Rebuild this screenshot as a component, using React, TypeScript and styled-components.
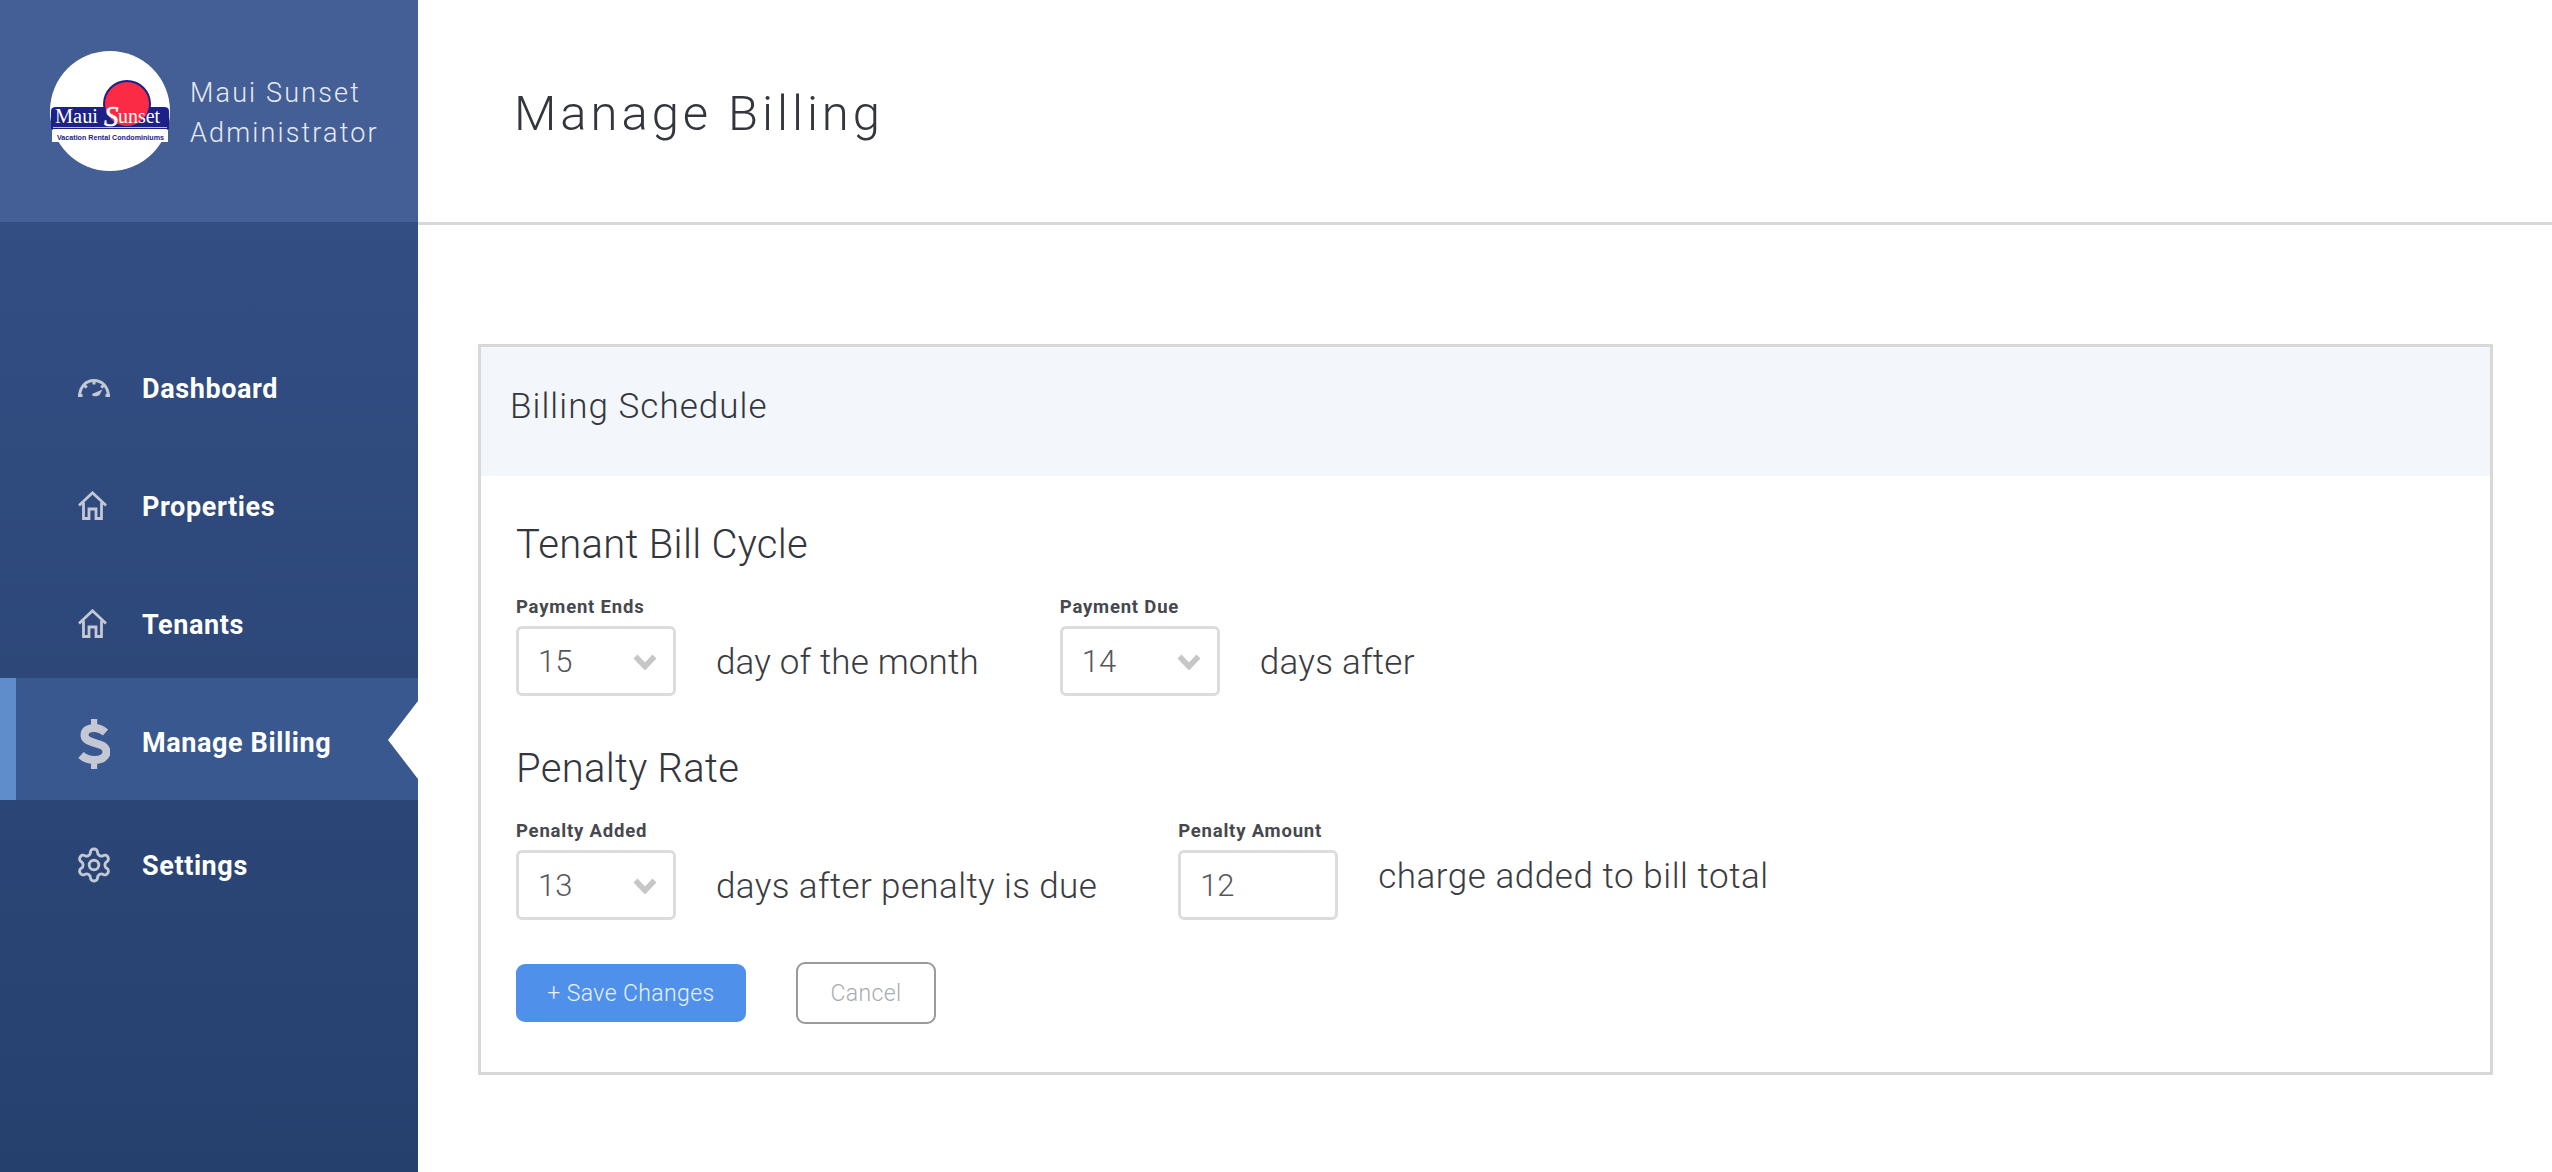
import React from 'react';
import styled, { createGlobalStyle } from 'styled-components';

const Global = createGlobalStyle`
  html, body { margin: 0; padding: 0; background: #fff; }
  * { box-sizing: border-box; }
  body { font-family: Roboto, "Liberation Sans", sans-serif; }
`;

const Page = styled.div`
  display: flex;
  width: 2552px;
  height: 1172px;
  overflow: hidden;
  background: #fff;
`;

const Sidebar = styled.aside`
  width: 418px;
  flex: none;
  display: flex;
  flex-direction: column;
  background: linear-gradient(180deg, #365188 0%, #26406e 100%);
`;

const Brand = styled.div`
  height: 222px;
  flex: none;
  display: flex;
  align-items: center;
  gap: 20px;
  padding-left: 50px;
  background: #445f95;
`;

const Logo = styled.svg`
  width: 120px;
  height: 120px;
  flex: none;
  display: block;
`;

const BrandText = styled.div`
  padding-top: 4px;
  color: #e6eaf2;
  font-weight: 300;
  font-size: 27px;
  line-height: 40px;
  letter-spacing: 2.15px;
  white-space: nowrap;
`;

const Nav = styled.nav`
  display: flex;
  flex-direction: column;
  padding-top: 107px;
`;

const NavItem = styled.a<{ $active?: boolean }>`
  position: relative;
  display: flex;
  align-items: center;
  height: ${(p) => (p.$active ? '122px' : '118px')};
  margin: ${(p) => (p.$active ? '-5px 0 6px' : '0')};
  padding-left: ${(p) => (p.$active ? '62px' : '78px')};
  border-left: ${(p) => (p.$active ? '16px solid #5f8dcb' : '0')};
  background: ${(p) => (p.$active ? '#39588f' : 'transparent')};
  color: #fff;
`;

const NavIcon = styled.span`
  width: 64px;
  flex: none;
  display: flex;
  align-items: center;
  color: #c3c8d4;
`;

const NavLabel = styled.span<{ $active?: boolean }>`
  padding-top: ${(p) => (p.$active ? '7px' : '2px')};
  font-weight: 700;
  font-size: 27px;
  letter-spacing: 0.6px;
  white-space: nowrap;
`;

const Notch = styled.span`
  position: absolute;
  right: 0;
  top: 23px;
  width: 30px;
  height: 78px;
  background: #fff;
  clip-path: polygon(100% 0, 0 50%, 100% 100%);
`;

const Main = styled.main`
  flex: 1;
  min-width: 0;
  display: flex;
  flex-direction: column;
`;

const TopBar = styled.header`
  height: 225px;
  flex: none;
  display: flex;
  align-items: center;
  padding: 4px 0 0 96px;
  border-bottom: 3px solid #d8d8d8;
`;

const PageTitle = styled.h1`
  margin: 0;
  color: #33363d;
  font-weight: 300;
  font-size: 49px;
  letter-spacing: 3.95px;
  white-space: nowrap;
`;

const Card = styled.section`
  margin: 119px 0 0 60px;
  width: 2015px;
  height: 731px;
  border: 3px solid #d8d8d8;
`;

const CardHead = styled.div`
  height: 129px;
  display: flex;
  align-items: center;
  padding: 0 0 11px 29px;
  background: #f3f6fb;
`;

const CardTitle = styled.h2`
  margin: 0;
  color: #33363d;
  font-weight: 300;
  font-size: 35px;
  letter-spacing: 1.05px;
  white-space: nowrap;
`;

const CardBody = styled.div`
  padding: 0 0 0 35px;
`;

const GroupTitle = styled.h3<{ $top: number }>`
  margin: ${(p) => p.$top}px 0 0;
  height: 50px;
  line-height: 52px;
  color: #33363d;
  font-weight: 300;
  font-size: 40px;
  letter-spacing: 0.3px;
  white-space: nowrap;
`;

const Row = styled.div`
  display: flex;
  align-items: flex-end;
  margin-top: 26px;
`;

const Field = styled.div`
  width: 160px;
  flex: none;
`;

const Label = styled.div`
  height: 24px;
  margin-bottom: 7px;
  line-height: 24px;
  color: #46484d;
  font-weight: 700;
  font-size: 18.5px;
  letter-spacing: 0.8px;
  white-space: nowrap;
`;

const Control = styled.div`
  height: 70px;
  display: flex;
  align-items: center;
  justify-content: space-between;
  padding: 0 16px 0 19px;
  border: 3px solid #dcdcdc;
  border-radius: 6px;
  color: #55575d;
  font-weight: 300;
  font-size: 31px;
`;

const Chevron = styled.svg`
  width: 24px;
  height: 16px;
  display: block;
  margin-top: 1px;
`;

const Suffix = styled.div<{ $spacing: number }>`
  margin: 0 81px 0 40px;
  height: 70px;
  line-height: 73px;
  color: #3a3c42;
  font-weight: 300;
  font-size: 35px;
  letter-spacing: ${(p) => p.$spacing}px;
  white-space: nowrap;
`;

const Raised = styled.span`
  display: block;
  margin-top: -10px;
`;

const Actions = styled.div`
  display: flex;
  align-items: center;
  gap: 50px;
  margin-top: 42px;
`;

const SaveButton = styled.button`
  width: 230px;
  height: 58px;
  padding: 0;
  border: 0;
  border-radius: 9px;
  background: #4f90ea;
  color: #e9f1fc;
  font-family: inherit;
  font-weight: 300;
  font-size: 23px;
  letter-spacing: 0.4px;
`;

const CancelButton = styled.button`
  width: 140px;
  height: 62px;
  padding: 0;
  border: 2.5px solid #9b9b9b;
  border-radius: 9px;
  background: #fff;
  color: #a9abaf;
  font-family: inherit;
  font-weight: 300;
  font-size: 23px;
  letter-spacing: 0.4px;
`;

const GaugeIcon = () => (
  <svg width="32" height="18" viewBox="0 0 32 18" fill="none" stroke="currentColor" strokeWidth="3">
    <path d="M1.500 17 C2 7.500 8 1.500 16 1.500 S30 7.500 30.500 17" />
    <path d="M0 16.500h4.500M27.500 16.500h4.500M16 1.500v4M6 6l2.800 2.700M26 6l-2.800 2.700" />
    <path d="M14 15l10.500-4.500-3 5.500c-2 1.300-7.500 2.500-7.500-1z" fill="currentColor" stroke="none" />
  </svg>
);

const HomeIcon = () => (
  <svg width="30" height="30" viewBox="0 0 30 30" fill="none" stroke="currentColor" strokeWidth="2.800" strokeLinejoin="miter">
    <path d="M1 14.500 L14.500 1.800 L28 14.500" />
    <path d="M5.500 11.500 V27.500 H11 V18 H18 V27.500 H23.500 V11.500" />
  </svg>
);

const DollarIcon = () => (
  <svg width="32" height="50" viewBox="0 0 32 50" fill="none" stroke="currentColor" style={{ marginTop: 10 }}>
    <path d="M13 0h6.200v9h-6.200zM13 41h6.200v9h-6.200z" fill="currentColor" stroke="none" />
    <path d="M27.500 13.500C24 10.500 20.500 9 16 9c-5.600 0-9.500 2.600-9.500 7 0 10.500 22 5.500 22 17 0 4.900-5 8-12 8-4.500 0-10-1.700-13.500-5" strokeWidth="8" />
  </svg>
);

const GearIcon = () => (
  <svg width="32" height="32" viewBox="2 2 20 20" overflow="visible" fill="none" stroke="currentColor" strokeWidth="1.800" strokeLinecap="round" strokeLinejoin="round">
    <path d="M12.220 2h-.44a2 2 0 0 0-2 2v.18a2 2 0 0 1-1 1.730l-.43.25a2 2 0 0 1-2 0l-.15-.08a2 2 0 0 0-2.730.730l-.22.380a2 2 0 0 0 .730 2.730l.15.1a2 2 0 0 1 1 1.720v.51a2 2 0 0 1-1 1.740l-.15.09a2 2 0 0 0-.730 2.730l.22.380a2 2 0 0 0 2.730.730l.15-.08a2 2 0 0 1 2 0l.43.25a2 2 0 0 1 1 1.730V20a2 2 0 0 0 2 2h.44a2 2 0 0 0 2-2v-.18a2 2 0 0 1 1-1.730l.43-.25a2 2 0 0 1 2 0l.15.08a2 2 0 0 0 2.730-.730l.22-.390a2 2 0 0 0-.730-2.730l-.15-.080a2 2 0 0 1-1-1.740v-.5a2 2 0 0 1 1-1.740l.15-.090a2 2 0 0 0 .730-2.730l-.22-.380a2 2 0 0 0-2.730-.730l-.15.080a2 2 0 0 1-2 0l-.43-.25a2 2 0 0 1-1-1.730V4a2 2 0 0 0-2-2z" />
    <circle cx="12" cy="12" r="3" />
  </svg>
);

const Arrow = () => (
  <Chevron viewBox="0 0 24 16" fill="none" stroke="#c6c6c6" strokeWidth="5.500">
    <path d="M2.500 2.500 L12 12.500 L21.500 2.500" />
  </Chevron>
);

const App = () => (
  <Page>
    <Global />
    <Sidebar>
      <Brand>
        <Logo viewBox="0 0 120 120">
          <circle cx="60" cy="60" r="60" fill="#fff" />
          <path d="M1 60 Q1 56 6 56 H114 Q119 56 119 60 V78 H1 Z" fill="#1b2186" />
          <circle cx="77" cy="53" r="24" fill="#1b2186" />
          <circle cx="77" cy="53" r="22" fill="#fb2a45" />
          <path d="M3 76.500 H117" stroke="#fff" strokeWidth="0.700" />
          <text x="5" y="72" fontFamily="Liberation Serif, serif" fontSize="20" fill="#fff" textLength="43" lengthAdjust="spacingAndGlyphs">Maui</text>
          <text x="54" y="75" fontFamily="Liberation Serif, serif" fontSize="29" fontStyle="italic" fill="#fff" stroke="#fff" strokeWidth="0.500">S</text>
          <text x="68" y="72" fontFamily="Liberation Serif, serif" fontSize="20" fill="#fff" textLength="42" lengthAdjust="spacingAndGlyphs">unset</text>
          <rect x="2" y="79" width="116" height="12" fill="#fff" />
          <text x="7" y="88.500" fontFamily="Liberation Sans, sans-serif" fontWeight="700" fontSize="7" fill="#1b2186" textLength="107" lengthAdjust="spacingAndGlyphs">Vacation Rental Condominiums</text>
        </Logo>
        <BrandText>
          Maui Sunset
          <br />
          Administrator
        </BrandText>
      </Brand>
      <Nav>
        <NavItem>
          <NavIcon><GaugeIcon /></NavIcon>
          <NavLabel>Dashboard</NavLabel>
        </NavItem>
        <NavItem>
          <NavIcon><HomeIcon /></NavIcon>
          <NavLabel>Properties</NavLabel>
        </NavItem>
        <NavItem>
          <NavIcon><HomeIcon /></NavIcon>
          <NavLabel>Tenants</NavLabel>
        </NavItem>
        <NavItem $active>
          <NavIcon><DollarIcon /></NavIcon>
          <NavLabel $active>Manage Billing</NavLabel>
          <Notch />
        </NavItem>
        <NavItem>
          <NavIcon><GearIcon /></NavIcon>
          <NavLabel>Settings</NavLabel>
        </NavItem>
      </Nav>
    </Sidebar>
    <Main>
      <TopBar>
        <PageTitle>Manage Billing</PageTitle>
      </TopBar>
      <Card>
        <CardHead>
          <CardTitle>Billing Schedule</CardTitle>
        </CardHead>
        <CardBody>
          <GroupTitle $top={43}>Tenant Bill Cycle</GroupTitle>
          <Row>
            <Field>
              <Label>Payment Ends</Label>
              <Control>15<Arrow /></Control>
            </Field>
            <Suffix $spacing={0.15}>day of the month</Suffix>
            <Field>
              <Label>Payment Due</Label>
              <Control>14<Arrow /></Control>
            </Field>
            <Suffix $spacing={0.25}>days after</Suffix>
          </Row>
          <GroupTitle $top={47}>Penalty Rate</GroupTitle>
          <Row>
            <Field>
              <Label>Penalty Added</Label>
              <Control>13<Arrow /></Control>
            </Field>
            <Suffix $spacing={0.38}>days after penalty is due</Suffix>
            <Field>
              <Label>Penalty Amount</Label>
              <Control>12</Control>
            </Field>
            <Suffix $spacing={0.55}><Raised>charge added to bill total</Raised></Suffix>
          </Row>
          <Actions>
            <SaveButton>+ Save Changes</SaveButton>
            <CancelButton>Cancel</CancelButton>
          </Actions>
        </CardBody>
      </Card>
    </Main>
  </Page>
);

export default App;
